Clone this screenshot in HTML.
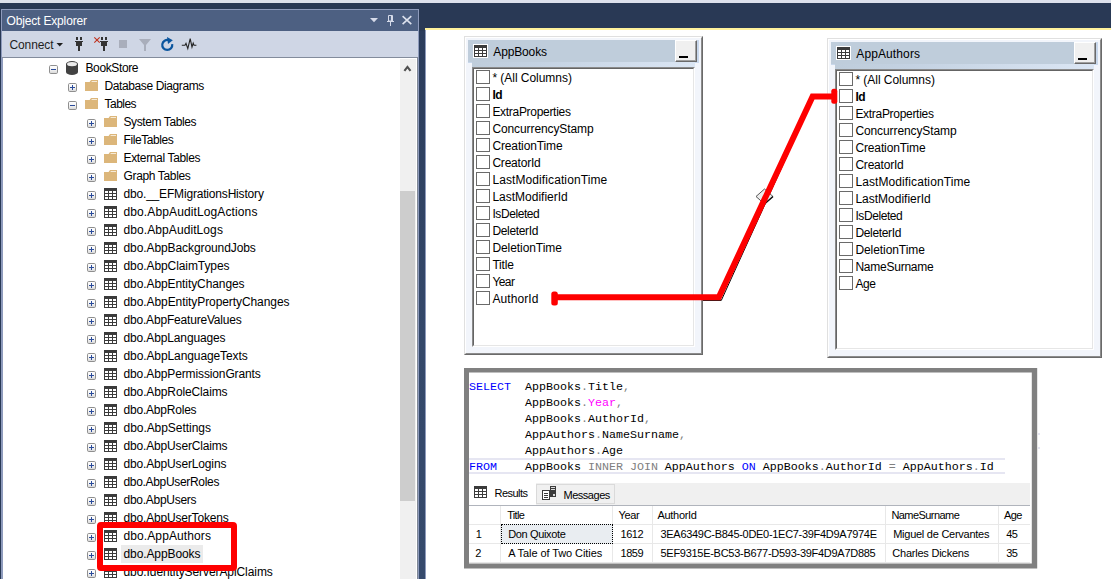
<!DOCTYPE html>
<html><head><meta charset="utf-8"><title>SSMS</title>
<style>
html,body{margin:0;padding:0}
body{width:1111px;height:579px;overflow:hidden;position:relative;background:#293955;font-family:"Liberation Sans", sans-serif;}
.t{position:absolute;white-space:pre;line-height:20px;}
svg{position:absolute;overflow:visible}
</style></head><body>
<div style="position:absolute;left:0px;top:0px;width:1111px;height:3px;background:#dde1ec;"></div>
<div style="position:absolute;left:0px;top:3px;width:1111px;height:576px;background:#293955;"></div>
<div style="position:absolute;left:419px;top:31px;width:6px;height:548px;background:linear-gradient(#2b3c5b,#34486a 300px,#364a6c);"></div>
<div style="position:absolute;left:1px;top:9px;width:418px;height:570px;background:#8e9bbc;"></div>
<div style="position:absolute;left:2px;top:10px;width:416px;height:21px;background:#4d6082;"></div>
<div style="position:absolute;left:2px;top:31px;width:416px;height:26px;background:#cfd6e5;"></div>
<div style="position:absolute;left:2px;top:57px;width:416px;height:1px;background:#838c9c;"></div>
<div style="position:absolute;left:3px;top:58px;width:414px;height:521px;background:#ffffff;"></div>
<div style="position:absolute;left:417px;top:57px;width:1px;height:522px;background:#7f8794;"></div>
<svg style="left:56px;top:43px" width="8" height="4"><path d="M0.5 0 L7 0 L3.75 3.5Z" fill="#1e1e1e"/></svg>
<svg style="left:370px;top:17px" width="9" height="6"><path d="M0 1 L8 1 L4 5.2Z" fill="#d6dbe9"/></svg>
<svg style="left:386px;top:15px" width="9" height="11"><path d="M2.5 0.5 H6.5 V6 H2.5Z M1 6.5 H8 M4.5 6.5 V11" fill="none" stroke="#d6dbe9" stroke-width="1"/><path d="M5.5 0.5V6" stroke="#d6dbe9" stroke-width="1.2"/></svg>
<svg style="left:402px;top:16px" width="10" height="9"><path d="M0.6 0.2 L9.3 8.2 M9.3 0.2 L0.6 8.2" stroke="#dde2ee" stroke-width="1.6" fill="none"/></svg>
<svg style="left:75px;top:37px" width="8" height="14"><path d="M1 0 H3 V3 H1Z M5 0 H7 V3 H5Z M0 4 H8 V5 H7 V9 H5 V14 H3 V9 H1 V5 H0Z" fill="#333333"/></svg>
<svg style="left:100px;top:37px" width="8" height="14"><path d="M1 0 H3 V3 H1Z M5 0 H7 V3 H5Z M0 4 H8 V5 H7 V9 H5 V14 H3 V9 H1 V5 H0Z" fill="#333333"/></svg>
<svg style="left:94px;top:37px" width="6" height="6"><path d="M0.3 0.3 L5.7 5.7 M5.7 0.3 L0.3 5.7" stroke="#c0301c" stroke-width="1.1"/></svg>
<div style="position:absolute;left:119px;top:40px;width:8px;height:8px;background:#a9aebb;"></div>
<svg style="left:139px;top:39px" width="12" height="12"><path d="M0 0 H12 L7 6 V12 H5 V6Z" fill="#a9aebb"/></svg>
<svg style="left:161px;top:37px" width="13" height="14"><path d="M7.8 3.2 A5 5 0 1 0 11.2 7.2" fill="none" stroke="#0a559e" stroke-width="2.2"/><path d="M6 0 L11.8 3.2 L7 7Z" fill="#0a559e"/></svg>
<svg style="left:181px;top:38px" width="16" height="11"><path d="M0.8 7.3 H4 L5 5.3 L6.8 10.6 L9.2 0.6 L11 9 L12.2 5.2 L13 7.3 H15.4" fill="none" stroke="#222" stroke-width="1.1"/></svg>
<div style="position:absolute;left:400px;top:59px;width:16px;height:520px;background:#f0f0f0;"></div>
<div style="position:absolute;left:400px;top:191px;width:15px;height:310px;background:#cdcdcd;"></div>
<svg style="left:403px;top:65px" width="9" height="8"><path d="M1.4 5.9 L4.45 1.9 L7.5 5.9" fill="none" stroke="#505050" stroke-width="2.1" stroke-linejoin="miter"/></svg>
<svg style="left:0;top:0" width="0" height="0"><defs><linearGradient id="eg" x1="0" y1="0" x2="0" y2="1"><stop offset="0" stop-color="#fff"/><stop offset="0.5" stop-color="#f4f4f4"/><stop offset="1" stop-color="#d6d6d6"/></linearGradient></defs></svg>
<div style="position:absolute;left:121px;top:545px;width:82px;height:18px;background:#ebebeb;"></div>
<svg style="left:49px;top:65px" width="9" height="9"><rect x="0.5" y="0.5" width="8" height="8" rx="1.2" fill="url(#eg)" stroke="#8f8f8f"/><path d="M2 4.5 H7 " stroke="#2a4b9b" stroke-width="1"/></svg>
<svg style="left:66px;top:61px" width="12" height="14"><path d="M0 3 A6 3 0 0 1 12 3 V11 A6 3 0 0 1 0 11Z" fill="#424242"/><ellipse cx="6" cy="3.1" rx="5" ry="2.2" fill="#ececec"/></svg>
<svg style="left:68px;top:83px" width="9" height="9"><rect x="0.5" y="0.5" width="8" height="8" rx="1.2" fill="url(#eg)" stroke="#8f8f8f"/><path d="M2 4.5 H7 M4.5 2 V7" stroke="#2a4b9b" stroke-width="1"/></svg>
<svg style="left:85px;top:80px" width="13" height="11"><path d="M0 2 H4.6 L6 0 H13 V11 H0Z" fill="#dcb67a"/><path d="M6.6 1.5 H12" stroke="#f6ead6" stroke-width="1"/></svg>
<svg style="left:68px;top:101px" width="9" height="9"><rect x="0.5" y="0.5" width="8" height="8" rx="1.2" fill="url(#eg)" stroke="#8f8f8f"/><path d="M2 4.5 H7 " stroke="#2a4b9b" stroke-width="1"/></svg>
<svg style="left:85px;top:98px" width="13" height="11"><path d="M0 2 H4.6 L6 0 H13 V11 H0Z" fill="#dcb67a"/><path d="M6.6 1.5 H12" stroke="#f6ead6" stroke-width="1"/></svg>
<svg style="left:87px;top:119px" width="9" height="9"><rect x="0.5" y="0.5" width="8" height="8" rx="1.2" fill="url(#eg)" stroke="#8f8f8f"/><path d="M2 4.5 H7 M4.5 2 V7" stroke="#2a4b9b" stroke-width="1"/></svg>
<svg style="left:104px;top:116px" width="13" height="11"><path d="M0 2 H4.6 L6 0 H13 V11 H0Z" fill="#dcb67a"/><path d="M6.6 1.5 H12" stroke="#f6ead6" stroke-width="1"/></svg>
<svg style="left:87px;top:137px" width="9" height="9"><rect x="0.5" y="0.5" width="8" height="8" rx="1.2" fill="url(#eg)" stroke="#8f8f8f"/><path d="M2 4.5 H7 M4.5 2 V7" stroke="#2a4b9b" stroke-width="1"/></svg>
<svg style="left:104px;top:134px" width="13" height="11"><path d="M0 2 H4.6 L6 0 H13 V11 H0Z" fill="#dcb67a"/><path d="M6.6 1.5 H12" stroke="#f6ead6" stroke-width="1"/></svg>
<svg style="left:87px;top:155px" width="9" height="9"><rect x="0.5" y="0.5" width="8" height="8" rx="1.2" fill="url(#eg)" stroke="#8f8f8f"/><path d="M2 4.5 H7 M4.5 2 V7" stroke="#2a4b9b" stroke-width="1"/></svg>
<svg style="left:104px;top:152px" width="13" height="11"><path d="M0 2 H4.6 L6 0 H13 V11 H0Z" fill="#dcb67a"/><path d="M6.6 1.5 H12" stroke="#f6ead6" stroke-width="1"/></svg>
<svg style="left:87px;top:173px" width="9" height="9"><rect x="0.5" y="0.5" width="8" height="8" rx="1.2" fill="url(#eg)" stroke="#8f8f8f"/><path d="M2 4.5 H7 M4.5 2 V7" stroke="#2a4b9b" stroke-width="1"/></svg>
<svg style="left:104px;top:170px" width="13" height="11"><path d="M0 2 H4.6 L6 0 H13 V11 H0Z" fill="#dcb67a"/><path d="M6.6 1.5 H12" stroke="#f6ead6" stroke-width="1"/></svg>
<svg style="left:87px;top:191px" width="9" height="9"><rect x="0.5" y="0.5" width="8" height="8" rx="1.2" fill="url(#eg)" stroke="#8f8f8f"/><path d="M2 4.5 H7 M4.5 2 V7" stroke="#2a4b9b" stroke-width="1"/></svg>
<svg style="left:104px;top:188px" width="13" height="12"><rect width="13" height="12" fill="#3b3b3b"/><rect x="1" y="3" width="3" height="2" fill="#fff"/><rect x="1" y="6" width="3" height="2" fill="#fff"/><rect x="1" y="9" width="3" height="2" fill="#fff"/><rect x="5" y="3" width="3" height="2" fill="#fff"/><rect x="5" y="6" width="3" height="2" fill="#fff"/><rect x="5" y="9" width="3" height="2" fill="#fff"/><rect x="9" y="3" width="3" height="2" fill="#fff"/><rect x="9" y="6" width="3" height="2" fill="#fff"/><rect x="9" y="9" width="3" height="2" fill="#fff"/></svg>
<svg style="left:87px;top:209px" width="9" height="9"><rect x="0.5" y="0.5" width="8" height="8" rx="1.2" fill="url(#eg)" stroke="#8f8f8f"/><path d="M2 4.5 H7 M4.5 2 V7" stroke="#2a4b9b" stroke-width="1"/></svg>
<svg style="left:104px;top:206px" width="13" height="12"><rect width="13" height="12" fill="#3b3b3b"/><rect x="1" y="3" width="3" height="2" fill="#fff"/><rect x="1" y="6" width="3" height="2" fill="#fff"/><rect x="1" y="9" width="3" height="2" fill="#fff"/><rect x="5" y="3" width="3" height="2" fill="#fff"/><rect x="5" y="6" width="3" height="2" fill="#fff"/><rect x="5" y="9" width="3" height="2" fill="#fff"/><rect x="9" y="3" width="3" height="2" fill="#fff"/><rect x="9" y="6" width="3" height="2" fill="#fff"/><rect x="9" y="9" width="3" height="2" fill="#fff"/></svg>
<svg style="left:87px;top:227px" width="9" height="9"><rect x="0.5" y="0.5" width="8" height="8" rx="1.2" fill="url(#eg)" stroke="#8f8f8f"/><path d="M2 4.5 H7 M4.5 2 V7" stroke="#2a4b9b" stroke-width="1"/></svg>
<svg style="left:104px;top:224px" width="13" height="12"><rect width="13" height="12" fill="#3b3b3b"/><rect x="1" y="3" width="3" height="2" fill="#fff"/><rect x="1" y="6" width="3" height="2" fill="#fff"/><rect x="1" y="9" width="3" height="2" fill="#fff"/><rect x="5" y="3" width="3" height="2" fill="#fff"/><rect x="5" y="6" width="3" height="2" fill="#fff"/><rect x="5" y="9" width="3" height="2" fill="#fff"/><rect x="9" y="3" width="3" height="2" fill="#fff"/><rect x="9" y="6" width="3" height="2" fill="#fff"/><rect x="9" y="9" width="3" height="2" fill="#fff"/></svg>
<svg style="left:87px;top:245px" width="9" height="9"><rect x="0.5" y="0.5" width="8" height="8" rx="1.2" fill="url(#eg)" stroke="#8f8f8f"/><path d="M2 4.5 H7 M4.5 2 V7" stroke="#2a4b9b" stroke-width="1"/></svg>
<svg style="left:104px;top:242px" width="13" height="12"><rect width="13" height="12" fill="#3b3b3b"/><rect x="1" y="3" width="3" height="2" fill="#fff"/><rect x="1" y="6" width="3" height="2" fill="#fff"/><rect x="1" y="9" width="3" height="2" fill="#fff"/><rect x="5" y="3" width="3" height="2" fill="#fff"/><rect x="5" y="6" width="3" height="2" fill="#fff"/><rect x="5" y="9" width="3" height="2" fill="#fff"/><rect x="9" y="3" width="3" height="2" fill="#fff"/><rect x="9" y="6" width="3" height="2" fill="#fff"/><rect x="9" y="9" width="3" height="2" fill="#fff"/></svg>
<svg style="left:87px;top:263px" width="9" height="9"><rect x="0.5" y="0.5" width="8" height="8" rx="1.2" fill="url(#eg)" stroke="#8f8f8f"/><path d="M2 4.5 H7 M4.5 2 V7" stroke="#2a4b9b" stroke-width="1"/></svg>
<svg style="left:104px;top:260px" width="13" height="12"><rect width="13" height="12" fill="#3b3b3b"/><rect x="1" y="3" width="3" height="2" fill="#fff"/><rect x="1" y="6" width="3" height="2" fill="#fff"/><rect x="1" y="9" width="3" height="2" fill="#fff"/><rect x="5" y="3" width="3" height="2" fill="#fff"/><rect x="5" y="6" width="3" height="2" fill="#fff"/><rect x="5" y="9" width="3" height="2" fill="#fff"/><rect x="9" y="3" width="3" height="2" fill="#fff"/><rect x="9" y="6" width="3" height="2" fill="#fff"/><rect x="9" y="9" width="3" height="2" fill="#fff"/></svg>
<svg style="left:87px;top:281px" width="9" height="9"><rect x="0.5" y="0.5" width="8" height="8" rx="1.2" fill="url(#eg)" stroke="#8f8f8f"/><path d="M2 4.5 H7 M4.5 2 V7" stroke="#2a4b9b" stroke-width="1"/></svg>
<svg style="left:104px;top:278px" width="13" height="12"><rect width="13" height="12" fill="#3b3b3b"/><rect x="1" y="3" width="3" height="2" fill="#fff"/><rect x="1" y="6" width="3" height="2" fill="#fff"/><rect x="1" y="9" width="3" height="2" fill="#fff"/><rect x="5" y="3" width="3" height="2" fill="#fff"/><rect x="5" y="6" width="3" height="2" fill="#fff"/><rect x="5" y="9" width="3" height="2" fill="#fff"/><rect x="9" y="3" width="3" height="2" fill="#fff"/><rect x="9" y="6" width="3" height="2" fill="#fff"/><rect x="9" y="9" width="3" height="2" fill="#fff"/></svg>
<svg style="left:87px;top:299px" width="9" height="9"><rect x="0.5" y="0.5" width="8" height="8" rx="1.2" fill="url(#eg)" stroke="#8f8f8f"/><path d="M2 4.5 H7 M4.5 2 V7" stroke="#2a4b9b" stroke-width="1"/></svg>
<svg style="left:104px;top:296px" width="13" height="12"><rect width="13" height="12" fill="#3b3b3b"/><rect x="1" y="3" width="3" height="2" fill="#fff"/><rect x="1" y="6" width="3" height="2" fill="#fff"/><rect x="1" y="9" width="3" height="2" fill="#fff"/><rect x="5" y="3" width="3" height="2" fill="#fff"/><rect x="5" y="6" width="3" height="2" fill="#fff"/><rect x="5" y="9" width="3" height="2" fill="#fff"/><rect x="9" y="3" width="3" height="2" fill="#fff"/><rect x="9" y="6" width="3" height="2" fill="#fff"/><rect x="9" y="9" width="3" height="2" fill="#fff"/></svg>
<svg style="left:87px;top:317px" width="9" height="9"><rect x="0.5" y="0.5" width="8" height="8" rx="1.2" fill="url(#eg)" stroke="#8f8f8f"/><path d="M2 4.5 H7 M4.5 2 V7" stroke="#2a4b9b" stroke-width="1"/></svg>
<svg style="left:104px;top:314px" width="13" height="12"><rect width="13" height="12" fill="#3b3b3b"/><rect x="1" y="3" width="3" height="2" fill="#fff"/><rect x="1" y="6" width="3" height="2" fill="#fff"/><rect x="1" y="9" width="3" height="2" fill="#fff"/><rect x="5" y="3" width="3" height="2" fill="#fff"/><rect x="5" y="6" width="3" height="2" fill="#fff"/><rect x="5" y="9" width="3" height="2" fill="#fff"/><rect x="9" y="3" width="3" height="2" fill="#fff"/><rect x="9" y="6" width="3" height="2" fill="#fff"/><rect x="9" y="9" width="3" height="2" fill="#fff"/></svg>
<svg style="left:87px;top:335px" width="9" height="9"><rect x="0.5" y="0.5" width="8" height="8" rx="1.2" fill="url(#eg)" stroke="#8f8f8f"/><path d="M2 4.5 H7 M4.5 2 V7" stroke="#2a4b9b" stroke-width="1"/></svg>
<svg style="left:104px;top:332px" width="13" height="12"><rect width="13" height="12" fill="#3b3b3b"/><rect x="1" y="3" width="3" height="2" fill="#fff"/><rect x="1" y="6" width="3" height="2" fill="#fff"/><rect x="1" y="9" width="3" height="2" fill="#fff"/><rect x="5" y="3" width="3" height="2" fill="#fff"/><rect x="5" y="6" width="3" height="2" fill="#fff"/><rect x="5" y="9" width="3" height="2" fill="#fff"/><rect x="9" y="3" width="3" height="2" fill="#fff"/><rect x="9" y="6" width="3" height="2" fill="#fff"/><rect x="9" y="9" width="3" height="2" fill="#fff"/></svg>
<svg style="left:87px;top:353px" width="9" height="9"><rect x="0.5" y="0.5" width="8" height="8" rx="1.2" fill="url(#eg)" stroke="#8f8f8f"/><path d="M2 4.5 H7 M4.5 2 V7" stroke="#2a4b9b" stroke-width="1"/></svg>
<svg style="left:104px;top:350px" width="13" height="12"><rect width="13" height="12" fill="#3b3b3b"/><rect x="1" y="3" width="3" height="2" fill="#fff"/><rect x="1" y="6" width="3" height="2" fill="#fff"/><rect x="1" y="9" width="3" height="2" fill="#fff"/><rect x="5" y="3" width="3" height="2" fill="#fff"/><rect x="5" y="6" width="3" height="2" fill="#fff"/><rect x="5" y="9" width="3" height="2" fill="#fff"/><rect x="9" y="3" width="3" height="2" fill="#fff"/><rect x="9" y="6" width="3" height="2" fill="#fff"/><rect x="9" y="9" width="3" height="2" fill="#fff"/></svg>
<svg style="left:87px;top:371px" width="9" height="9"><rect x="0.5" y="0.5" width="8" height="8" rx="1.2" fill="url(#eg)" stroke="#8f8f8f"/><path d="M2 4.5 H7 M4.5 2 V7" stroke="#2a4b9b" stroke-width="1"/></svg>
<svg style="left:104px;top:368px" width="13" height="12"><rect width="13" height="12" fill="#3b3b3b"/><rect x="1" y="3" width="3" height="2" fill="#fff"/><rect x="1" y="6" width="3" height="2" fill="#fff"/><rect x="1" y="9" width="3" height="2" fill="#fff"/><rect x="5" y="3" width="3" height="2" fill="#fff"/><rect x="5" y="6" width="3" height="2" fill="#fff"/><rect x="5" y="9" width="3" height="2" fill="#fff"/><rect x="9" y="3" width="3" height="2" fill="#fff"/><rect x="9" y="6" width="3" height="2" fill="#fff"/><rect x="9" y="9" width="3" height="2" fill="#fff"/></svg>
<svg style="left:87px;top:389px" width="9" height="9"><rect x="0.5" y="0.5" width="8" height="8" rx="1.2" fill="url(#eg)" stroke="#8f8f8f"/><path d="M2 4.5 H7 M4.5 2 V7" stroke="#2a4b9b" stroke-width="1"/></svg>
<svg style="left:104px;top:386px" width="13" height="12"><rect width="13" height="12" fill="#3b3b3b"/><rect x="1" y="3" width="3" height="2" fill="#fff"/><rect x="1" y="6" width="3" height="2" fill="#fff"/><rect x="1" y="9" width="3" height="2" fill="#fff"/><rect x="5" y="3" width="3" height="2" fill="#fff"/><rect x="5" y="6" width="3" height="2" fill="#fff"/><rect x="5" y="9" width="3" height="2" fill="#fff"/><rect x="9" y="3" width="3" height="2" fill="#fff"/><rect x="9" y="6" width="3" height="2" fill="#fff"/><rect x="9" y="9" width="3" height="2" fill="#fff"/></svg>
<svg style="left:87px;top:407px" width="9" height="9"><rect x="0.5" y="0.5" width="8" height="8" rx="1.2" fill="url(#eg)" stroke="#8f8f8f"/><path d="M2 4.5 H7 M4.5 2 V7" stroke="#2a4b9b" stroke-width="1"/></svg>
<svg style="left:104px;top:404px" width="13" height="12"><rect width="13" height="12" fill="#3b3b3b"/><rect x="1" y="3" width="3" height="2" fill="#fff"/><rect x="1" y="6" width="3" height="2" fill="#fff"/><rect x="1" y="9" width="3" height="2" fill="#fff"/><rect x="5" y="3" width="3" height="2" fill="#fff"/><rect x="5" y="6" width="3" height="2" fill="#fff"/><rect x="5" y="9" width="3" height="2" fill="#fff"/><rect x="9" y="3" width="3" height="2" fill="#fff"/><rect x="9" y="6" width="3" height="2" fill="#fff"/><rect x="9" y="9" width="3" height="2" fill="#fff"/></svg>
<svg style="left:87px;top:425px" width="9" height="9"><rect x="0.5" y="0.5" width="8" height="8" rx="1.2" fill="url(#eg)" stroke="#8f8f8f"/><path d="M2 4.5 H7 M4.5 2 V7" stroke="#2a4b9b" stroke-width="1"/></svg>
<svg style="left:104px;top:422px" width="13" height="12"><rect width="13" height="12" fill="#3b3b3b"/><rect x="1" y="3" width="3" height="2" fill="#fff"/><rect x="1" y="6" width="3" height="2" fill="#fff"/><rect x="1" y="9" width="3" height="2" fill="#fff"/><rect x="5" y="3" width="3" height="2" fill="#fff"/><rect x="5" y="6" width="3" height="2" fill="#fff"/><rect x="5" y="9" width="3" height="2" fill="#fff"/><rect x="9" y="3" width="3" height="2" fill="#fff"/><rect x="9" y="6" width="3" height="2" fill="#fff"/><rect x="9" y="9" width="3" height="2" fill="#fff"/></svg>
<svg style="left:87px;top:443px" width="9" height="9"><rect x="0.5" y="0.5" width="8" height="8" rx="1.2" fill="url(#eg)" stroke="#8f8f8f"/><path d="M2 4.5 H7 M4.5 2 V7" stroke="#2a4b9b" stroke-width="1"/></svg>
<svg style="left:104px;top:440px" width="13" height="12"><rect width="13" height="12" fill="#3b3b3b"/><rect x="1" y="3" width="3" height="2" fill="#fff"/><rect x="1" y="6" width="3" height="2" fill="#fff"/><rect x="1" y="9" width="3" height="2" fill="#fff"/><rect x="5" y="3" width="3" height="2" fill="#fff"/><rect x="5" y="6" width="3" height="2" fill="#fff"/><rect x="5" y="9" width="3" height="2" fill="#fff"/><rect x="9" y="3" width="3" height="2" fill="#fff"/><rect x="9" y="6" width="3" height="2" fill="#fff"/><rect x="9" y="9" width="3" height="2" fill="#fff"/></svg>
<svg style="left:87px;top:461px" width="9" height="9"><rect x="0.5" y="0.5" width="8" height="8" rx="1.2" fill="url(#eg)" stroke="#8f8f8f"/><path d="M2 4.5 H7 M4.5 2 V7" stroke="#2a4b9b" stroke-width="1"/></svg>
<svg style="left:104px;top:458px" width="13" height="12"><rect width="13" height="12" fill="#3b3b3b"/><rect x="1" y="3" width="3" height="2" fill="#fff"/><rect x="1" y="6" width="3" height="2" fill="#fff"/><rect x="1" y="9" width="3" height="2" fill="#fff"/><rect x="5" y="3" width="3" height="2" fill="#fff"/><rect x="5" y="6" width="3" height="2" fill="#fff"/><rect x="5" y="9" width="3" height="2" fill="#fff"/><rect x="9" y="3" width="3" height="2" fill="#fff"/><rect x="9" y="6" width="3" height="2" fill="#fff"/><rect x="9" y="9" width="3" height="2" fill="#fff"/></svg>
<svg style="left:87px;top:479px" width="9" height="9"><rect x="0.5" y="0.5" width="8" height="8" rx="1.2" fill="url(#eg)" stroke="#8f8f8f"/><path d="M2 4.5 H7 M4.5 2 V7" stroke="#2a4b9b" stroke-width="1"/></svg>
<svg style="left:104px;top:476px" width="13" height="12"><rect width="13" height="12" fill="#3b3b3b"/><rect x="1" y="3" width="3" height="2" fill="#fff"/><rect x="1" y="6" width="3" height="2" fill="#fff"/><rect x="1" y="9" width="3" height="2" fill="#fff"/><rect x="5" y="3" width="3" height="2" fill="#fff"/><rect x="5" y="6" width="3" height="2" fill="#fff"/><rect x="5" y="9" width="3" height="2" fill="#fff"/><rect x="9" y="3" width="3" height="2" fill="#fff"/><rect x="9" y="6" width="3" height="2" fill="#fff"/><rect x="9" y="9" width="3" height="2" fill="#fff"/></svg>
<svg style="left:87px;top:497px" width="9" height="9"><rect x="0.5" y="0.5" width="8" height="8" rx="1.2" fill="url(#eg)" stroke="#8f8f8f"/><path d="M2 4.5 H7 M4.5 2 V7" stroke="#2a4b9b" stroke-width="1"/></svg>
<svg style="left:104px;top:494px" width="13" height="12"><rect width="13" height="12" fill="#3b3b3b"/><rect x="1" y="3" width="3" height="2" fill="#fff"/><rect x="1" y="6" width="3" height="2" fill="#fff"/><rect x="1" y="9" width="3" height="2" fill="#fff"/><rect x="5" y="3" width="3" height="2" fill="#fff"/><rect x="5" y="6" width="3" height="2" fill="#fff"/><rect x="5" y="9" width="3" height="2" fill="#fff"/><rect x="9" y="3" width="3" height="2" fill="#fff"/><rect x="9" y="6" width="3" height="2" fill="#fff"/><rect x="9" y="9" width="3" height="2" fill="#fff"/></svg>
<svg style="left:87px;top:515px" width="9" height="9"><rect x="0.5" y="0.5" width="8" height="8" rx="1.2" fill="url(#eg)" stroke="#8f8f8f"/><path d="M2 4.5 H7 M4.5 2 V7" stroke="#2a4b9b" stroke-width="1"/></svg>
<svg style="left:104px;top:512px" width="13" height="12"><rect width="13" height="12" fill="#3b3b3b"/><rect x="1" y="3" width="3" height="2" fill="#fff"/><rect x="1" y="6" width="3" height="2" fill="#fff"/><rect x="1" y="9" width="3" height="2" fill="#fff"/><rect x="5" y="3" width="3" height="2" fill="#fff"/><rect x="5" y="6" width="3" height="2" fill="#fff"/><rect x="5" y="9" width="3" height="2" fill="#fff"/><rect x="9" y="3" width="3" height="2" fill="#fff"/><rect x="9" y="6" width="3" height="2" fill="#fff"/><rect x="9" y="9" width="3" height="2" fill="#fff"/></svg>
<svg style="left:87px;top:533px" width="9" height="9"><rect x="0.5" y="0.5" width="8" height="8" rx="1.2" fill="url(#eg)" stroke="#8f8f8f"/><path d="M2 4.5 H7 M4.5 2 V7" stroke="#2a4b9b" stroke-width="1"/></svg>
<svg style="left:104px;top:530px" width="13" height="12"><rect width="13" height="12" fill="#3b3b3b"/><rect x="1" y="3" width="3" height="2" fill="#fff"/><rect x="1" y="6" width="3" height="2" fill="#fff"/><rect x="1" y="9" width="3" height="2" fill="#fff"/><rect x="5" y="3" width="3" height="2" fill="#fff"/><rect x="5" y="6" width="3" height="2" fill="#fff"/><rect x="5" y="9" width="3" height="2" fill="#fff"/><rect x="9" y="3" width="3" height="2" fill="#fff"/><rect x="9" y="6" width="3" height="2" fill="#fff"/><rect x="9" y="9" width="3" height="2" fill="#fff"/></svg>
<svg style="left:87px;top:551px" width="9" height="9"><rect x="0.5" y="0.5" width="8" height="8" rx="1.2" fill="url(#eg)" stroke="#8f8f8f"/><path d="M2 4.5 H7 M4.5 2 V7" stroke="#2a4b9b" stroke-width="1"/></svg>
<svg style="left:104px;top:548px" width="13" height="12"><rect width="13" height="12" fill="#3b3b3b"/><rect x="1" y="3" width="3" height="2" fill="#fff"/><rect x="1" y="6" width="3" height="2" fill="#fff"/><rect x="1" y="9" width="3" height="2" fill="#fff"/><rect x="5" y="3" width="3" height="2" fill="#fff"/><rect x="5" y="6" width="3" height="2" fill="#fff"/><rect x="5" y="9" width="3" height="2" fill="#fff"/><rect x="9" y="3" width="3" height="2" fill="#fff"/><rect x="9" y="6" width="3" height="2" fill="#fff"/><rect x="9" y="9" width="3" height="2" fill="#fff"/></svg>
<svg style="left:87px;top:569px" width="9" height="9"><rect x="0.5" y="0.5" width="8" height="8" rx="1.2" fill="url(#eg)" stroke="#8f8f8f"/><path d="M2 4.5 H7 M4.5 2 V7" stroke="#2a4b9b" stroke-width="1"/></svg>
<svg style="left:104px;top:566px" width="13" height="12"><rect width="13" height="12" fill="#3b3b3b"/><rect x="1" y="3" width="3" height="2" fill="#fff"/><rect x="1" y="6" width="3" height="2" fill="#fff"/><rect x="1" y="9" width="3" height="2" fill="#fff"/><rect x="5" y="3" width="3" height="2" fill="#fff"/><rect x="5" y="6" width="3" height="2" fill="#fff"/><rect x="5" y="9" width="3" height="2" fill="#fff"/><rect x="9" y="3" width="3" height="2" fill="#fff"/><rect x="9" y="6" width="3" height="2" fill="#fff"/><rect x="9" y="9" width="3" height="2" fill="#fff"/></svg>
<div style="position:absolute;left:425px;top:28px;width:1px;height:551px;background:#8e9bbc;"></div>
<div style="position:absolute;left:426px;top:28px;width:685px;height:551px;background:#ffffff;"></div>
<div style="position:absolute;left:425px;top:28px;width:686px;height:2px;background:#fff29d;"></div>
<div style="position:absolute;left:464px;top:36px;width:239px;height:319px;background:#f2f5fb;box-sizing:border-box;border-top:1px solid #e0e0e0;border-left:1px solid #e0e0e0;border-right:1px solid #6a6a6a;border-bottom:1px solid #6a6a6a"></div>
<div style="position:absolute;left:465px;top:37px;width:237px;height:317px;background:transparent;box-sizing:border-box;border-top:1px solid #fff;border-left:1px solid #fff;border-right:1px solid #8c8c8c;border-bottom:1px solid #8c8c8c"></div>
<div style="position:absolute;left:468px;top:40px;width:231px;height:23px;background:#c9d8ec;"></div>
<div style="position:absolute;left:468px;top:40px;width:207px;height:22px;background:#bfcddb;"></div>
<div style="position:absolute;left:472px;top:62px;width:223px;height:5px;background:linear-gradient(90deg,#bfcddb,#c4d2e2 30%,#dbe6f4);"></div>
<div style="position:absolute;left:675px;top:40px;width:22px;height:22px;background:#f0f0f0;box-sizing:border-box;border-top:1px solid #fff;border-left:1px solid #fff;border-right:1px solid #696969;border-bottom:1px solid #696969"></div>
<div style="position:absolute;left:676px;top:41px;width:20px;height:20px;background:transparent;box-sizing:border-box;border-right:1px solid #a0a0a0;border-bottom:1px solid #a0a0a0"></div>
<div style="position:absolute;left:679px;top:56px;width:9px;height:2px;background:#000;"></div>
<div style="position:absolute;left:473px;top:44px;width:15px;height:14px;background:#fff;"></div>
<svg style="left:474px;top:45px" width="13" height="12"><rect width="13" height="12" fill="#3b3b3b"/><rect x="1" y="3" width="3" height="2" fill="#fff"/><rect x="1" y="6" width="3" height="2" fill="#fff"/><rect x="1" y="9" width="3" height="2" fill="#fff"/><rect x="5" y="3" width="3" height="2" fill="#fff"/><rect x="5" y="6" width="3" height="2" fill="#fff"/><rect x="5" y="9" width="3" height="2" fill="#fff"/><rect x="9" y="3" width="3" height="2" fill="#fff"/><rect x="9" y="6" width="3" height="2" fill="#fff"/><rect x="9" y="9" width="3" height="2" fill="#fff"/></svg>
<div style="position:absolute;left:472px;top:67px;width:223px;height:280px;background:#fff;box-sizing:border-box;border-top:1px solid #8a8a8a;border-left:1px solid #8a8a8a;border-right:1px solid #fff;border-bottom:1px solid #fff"></div>
<div style="position:absolute;left:473px;top:68px;width:221px;height:278px;background:transparent;box-sizing:border-box;border-top:1px solid #646464;border-left:1px solid #646464;border-right:1px solid #e6e6e6;border-bottom:1px solid #e6e6e6"></div>
<div style="position:absolute;left:476px;top:70px;width:14px;height:14px;background:#fff;box-sizing:border-box;border:1px solid #6a6a6a"></div>
<div style="position:absolute;left:476px;top:87px;width:14px;height:14px;background:#fff;box-sizing:border-box;border:1px solid #6a6a6a"></div>
<div style="position:absolute;left:476px;top:104px;width:14px;height:14px;background:#fff;box-sizing:border-box;border:1px solid #6a6a6a"></div>
<div style="position:absolute;left:476px;top:121px;width:14px;height:14px;background:#fff;box-sizing:border-box;border:1px solid #6a6a6a"></div>
<div style="position:absolute;left:476px;top:138px;width:14px;height:14px;background:#fff;box-sizing:border-box;border:1px solid #6a6a6a"></div>
<div style="position:absolute;left:476px;top:155px;width:14px;height:14px;background:#fff;box-sizing:border-box;border:1px solid #6a6a6a"></div>
<div style="position:absolute;left:476px;top:172px;width:14px;height:14px;background:#fff;box-sizing:border-box;border:1px solid #6a6a6a"></div>
<div style="position:absolute;left:476px;top:189px;width:14px;height:14px;background:#fff;box-sizing:border-box;border:1px solid #6a6a6a"></div>
<div style="position:absolute;left:476px;top:206px;width:14px;height:14px;background:#fff;box-sizing:border-box;border:1px solid #6a6a6a"></div>
<div style="position:absolute;left:476px;top:223px;width:14px;height:14px;background:#fff;box-sizing:border-box;border:1px solid #6a6a6a"></div>
<div style="position:absolute;left:476px;top:240px;width:14px;height:14px;background:#fff;box-sizing:border-box;border:1px solid #6a6a6a"></div>
<div style="position:absolute;left:476px;top:257px;width:14px;height:14px;background:#fff;box-sizing:border-box;border:1px solid #6a6a6a"></div>
<div style="position:absolute;left:476px;top:274px;width:14px;height:14px;background:#fff;box-sizing:border-box;border:1px solid #6a6a6a"></div>
<div style="position:absolute;left:476px;top:291px;width:14px;height:14px;background:#fff;box-sizing:border-box;border:1px solid #6a6a6a"></div>
<div style="position:absolute;left:827px;top:38px;width:275px;height:320px;background:#f2f5fb;box-sizing:border-box;border-top:1px solid #e0e0e0;border-left:1px solid #e0e0e0;border-right:1px solid #6a6a6a;border-bottom:1px solid #6a6a6a"></div>
<div style="position:absolute;left:828px;top:39px;width:273px;height:318px;background:transparent;box-sizing:border-box;border-top:1px solid #fff;border-left:1px solid #fff;border-right:1px solid #8c8c8c;border-bottom:1px solid #8c8c8c"></div>
<div style="position:absolute;left:831px;top:42px;width:267px;height:23px;background:#c9d8ec;"></div>
<div style="position:absolute;left:831px;top:42px;width:243px;height:22px;background:#bfcddb;"></div>
<div style="position:absolute;left:835px;top:64px;width:259px;height:5px;background:linear-gradient(90deg,#bfcddb,#c4d2e2 30%,#dbe6f4);"></div>
<div style="position:absolute;left:1074px;top:42px;width:22px;height:22px;background:#f0f0f0;box-sizing:border-box;border-top:1px solid #fff;border-left:1px solid #fff;border-right:1px solid #696969;border-bottom:1px solid #696969"></div>
<div style="position:absolute;left:1075px;top:43px;width:20px;height:20px;background:transparent;box-sizing:border-box;border-right:1px solid #a0a0a0;border-bottom:1px solid #a0a0a0"></div>
<div style="position:absolute;left:1078px;top:58px;width:9px;height:2px;background:#000;"></div>
<div style="position:absolute;left:836px;top:46px;width:15px;height:14px;background:#fff;"></div>
<svg style="left:837px;top:47px" width="13" height="12"><rect width="13" height="12" fill="#3b3b3b"/><rect x="1" y="3" width="3" height="2" fill="#fff"/><rect x="1" y="6" width="3" height="2" fill="#fff"/><rect x="1" y="9" width="3" height="2" fill="#fff"/><rect x="5" y="3" width="3" height="2" fill="#fff"/><rect x="5" y="6" width="3" height="2" fill="#fff"/><rect x="5" y="9" width="3" height="2" fill="#fff"/><rect x="9" y="3" width="3" height="2" fill="#fff"/><rect x="9" y="6" width="3" height="2" fill="#fff"/><rect x="9" y="9" width="3" height="2" fill="#fff"/></svg>
<div style="position:absolute;left:835px;top:69px;width:259px;height:281px;background:#fff;box-sizing:border-box;border-top:1px solid #8a8a8a;border-left:1px solid #8a8a8a;border-right:1px solid #fff;border-bottom:1px solid #fff"></div>
<div style="position:absolute;left:836px;top:70px;width:257px;height:279px;background:transparent;box-sizing:border-box;border-top:1px solid #646464;border-left:1px solid #646464;border-right:1px solid #e6e6e6;border-bottom:1px solid #e6e6e6"></div>
<div style="position:absolute;left:839px;top:72px;width:14px;height:14px;background:#fff;box-sizing:border-box;border:1px solid #6a6a6a"></div>
<div style="position:absolute;left:839px;top:89px;width:14px;height:14px;background:#fff;box-sizing:border-box;border:1px solid #6a6a6a"></div>
<div style="position:absolute;left:839px;top:106px;width:14px;height:14px;background:#fff;box-sizing:border-box;border:1px solid #6a6a6a"></div>
<div style="position:absolute;left:839px;top:123px;width:14px;height:14px;background:#fff;box-sizing:border-box;border:1px solid #6a6a6a"></div>
<div style="position:absolute;left:839px;top:140px;width:14px;height:14px;background:#fff;box-sizing:border-box;border:1px solid #6a6a6a"></div>
<div style="position:absolute;left:839px;top:157px;width:14px;height:14px;background:#fff;box-sizing:border-box;border:1px solid #6a6a6a"></div>
<div style="position:absolute;left:839px;top:174px;width:14px;height:14px;background:#fff;box-sizing:border-box;border:1px solid #6a6a6a"></div>
<div style="position:absolute;left:839px;top:191px;width:14px;height:14px;background:#fff;box-sizing:border-box;border:1px solid #6a6a6a"></div>
<div style="position:absolute;left:839px;top:208px;width:14px;height:14px;background:#fff;box-sizing:border-box;border:1px solid #6a6a6a"></div>
<div style="position:absolute;left:839px;top:225px;width:14px;height:14px;background:#fff;box-sizing:border-box;border:1px solid #6a6a6a"></div>
<div style="position:absolute;left:839px;top:242px;width:14px;height:14px;background:#fff;box-sizing:border-box;border:1px solid #6a6a6a"></div>
<div style="position:absolute;left:839px;top:259px;width:14px;height:14px;background:#fff;box-sizing:border-box;border:1px solid #6a6a6a"></div>
<div style="position:absolute;left:839px;top:276px;width:14px;height:14px;background:#fff;box-sizing:border-box;border:1px solid #6a6a6a"></div>
<svg style="left:0;top:0" width="1111" height="579"><path d="M703 300.4 H721.3 L813.5 97.5 H836" fill="none" stroke="#000" stroke-width="1"/><path d="M764.5 189 L773 196.5 L764.5 204 L756 196.5Z" fill="#ededed" stroke="#444" stroke-width="0.9"/><path d="M773 196.5 L764.5 204" fill="none" stroke="#111" stroke-width="1.5"/></svg>
<svg style="left:0;top:0" width="1111" height="579"><path fill-rule="evenodd" fill="#808080" d="M464 368.1 H1037.2 V568.6 H464Z M469 372.5 V563.4 H1031.8 V372.5Z"/></svg>
<div style="position:absolute;left:1038px;top:433px;width:2px;height:2px;background:#e6e6f2;"></div>
<div style="position:absolute;left:1038px;top:447px;width:2px;height:2px;background:#e6e6f2;"></div>
<div style="position:absolute;left:469px;top:458px;width:536px;height:2px;background:#e6e6f2;"></div>
<div style="position:absolute;left:469px;top:472px;width:536px;height:2px;background:#e6e6f2;"></div>
<div style="position:absolute;left:469px;top:483px;width:561px;height:22px;background:#f0f0f0;"></div>
<div style="position:absolute;left:469px;top:483px;width:67px;height:22px;background:#ffffff;"></div>
<div style="position:absolute;left:536px;top:484px;width:79px;height:20px;background:#f0f0f0;box-sizing:border-box;border:1px solid #dadada"></div>
<div style="position:absolute;left:469px;top:505px;width:561px;height:1px;background:#b0b4bc;"></div>
<svg style="left:474px;top:486px" width="13" height="12"><rect width="13" height="12" fill="#3b3b3b"/><rect x="1" y="3" width="3" height="2" fill="#fff"/><rect x="1" y="6" width="3" height="2" fill="#fff"/><rect x="1" y="9" width="3" height="2" fill="#fff"/><rect x="5" y="3" width="3" height="2" fill="#fff"/><rect x="5" y="6" width="3" height="2" fill="#fff"/><rect x="5" y="9" width="3" height="2" fill="#fff"/><rect x="9" y="3" width="3" height="2" fill="#fff"/><rect x="9" y="6" width="3" height="2" fill="#fff"/><rect x="9" y="9" width="3" height="2" fill="#fff"/></svg>
<svg style="left:542px;top:486px" width="15" height="14"><rect x="0.5" y="4.5" width="7" height="9" fill="#fff" stroke="#3b3b3b"/><path d="M2 7.5H6M2 9.5H6M2 11.5H6" stroke="#3b3b3b" stroke-width="1"/><rect x="8" y="0" width="6" height="11" fill="#3b3b3b"/><path d="M9 1.5H13M9 3.5H13" stroke="#ddd" stroke-width="1"/><rect x="11" y="8" width="2" height="2" fill="#ddd"/></svg>
<div style="position:absolute;left:500px;top:505.5px;width:1px;height:57px;background:#e8e8e8;"></div>
<div style="position:absolute;left:612px;top:505.5px;width:1px;height:57px;background:#e8e8e8;"></div>
<div style="position:absolute;left:652px;top:505.5px;width:1px;height:57px;background:#e8e8e8;"></div>
<div style="position:absolute;left:885px;top:505.5px;width:1px;height:57px;background:#e8e8e8;"></div>
<div style="position:absolute;left:998px;top:505.5px;width:1px;height:57px;background:#e8e8e8;"></div>
<div style="position:absolute;left:469px;top:524px;width:561px;height:1px;background:#e8e8e8;"></div>
<div style="position:absolute;left:469px;top:543px;width:561px;height:1px;background:#e8e8e8;"></div>
<div style="position:absolute;left:469px;top:562px;width:561px;height:1px;background:#e8e8e8;"></div>
<div style="position:absolute;left:501px;top:524px;width:112px;height:20px;background:#e9edf1;box-sizing:border-box;border:1px dotted #000"></div>
<span class="t" style='left:6.5px;top:10.84px;font-size:12px;font-family:"Liberation Sans", sans-serif;color:#ffffff;letter-spacing:-0.157px;'>Object Explorer</span>
<span class="t" style='left:9.5px;top:34.84px;font-size:12px;font-family:"Liberation Sans", sans-serif;color:#1e1e1e;letter-spacing:-0.117px;'>Connect</span>
<span class="t" style='left:85.5px;top:57.84px;font-size:12px;font-family:"Liberation Sans", sans-serif;color:#000;letter-spacing:-0.381px;'>BookStore</span>
<span class="t" style='left:104.5px;top:75.84px;font-size:12px;font-family:"Liberation Sans", sans-serif;color:#000;letter-spacing:-0.391px;'>Database Diagrams</span>
<span class="t" style='left:104.5px;top:93.84px;font-size:12px;font-family:"Liberation Sans", sans-serif;color:#000;letter-spacing:-0.518px;'>Tables</span>
<span class="t" style='left:123.5px;top:111.84px;font-size:12px;font-family:"Liberation Sans", sans-serif;color:#000;letter-spacing:-0.393px;'>System Tables</span>
<span class="t" style='left:123.5px;top:129.84px;font-size:12px;font-family:"Liberation Sans", sans-serif;color:#000;letter-spacing:-0.415px;'>FileTables</span>
<span class="t" style='left:123.5px;top:147.84px;font-size:12px;font-family:"Liberation Sans", sans-serif;color:#000;letter-spacing:-0.345px;'>External Tables</span>
<span class="t" style='left:123.5px;top:165.84px;font-size:12px;font-family:"Liberation Sans", sans-serif;color:#000;letter-spacing:-0.351px;'>Graph Tables</span>
<span class="t" style='left:123.5px;top:183.84px;font-size:12px;font-family:"Liberation Sans", sans-serif;color:#000;letter-spacing:-0.181px;'>dbo.__EFMigrationsHistory</span>
<span class="t" style='left:123.5px;top:201.84px;font-size:12px;font-family:"Liberation Sans", sans-serif;color:#000;letter-spacing:0.117px;'>dbo.AbpAuditLogActions</span>
<span class="t" style='left:123.5px;top:219.84px;font-size:12px;font-family:"Liberation Sans", sans-serif;color:#000;letter-spacing:0.087px;'>dbo.AbpAuditLogs</span>
<span class="t" style='left:123.5px;top:237.84px;font-size:12px;font-family:"Liberation Sans", sans-serif;color:#000;letter-spacing:-0.090px;'>dbo.AbpBackgroundJobs</span>
<span class="t" style='left:123.5px;top:255.84px;font-size:12px;font-family:"Liberation Sans", sans-serif;color:#000;letter-spacing:-0.087px;'>dbo.AbpClaimTypes</span>
<span class="t" style='left:123.5px;top:273.84px;font-size:12px;font-family:"Liberation Sans", sans-serif;color:#000;letter-spacing:-0.088px;'>dbo.AbpEntityChanges</span>
<span class="t" style='left:123.5px;top:291.84px;font-size:12px;font-family:"Liberation Sans", sans-serif;color:#000;letter-spacing:-0.078px;'>dbo.AbpEntityPropertyChanges</span>
<span class="t" style='left:123.5px;top:309.84px;font-size:12px;font-family:"Liberation Sans", sans-serif;color:#000;letter-spacing:-0.188px;'>dbo.AbpFeatureValues</span>
<span class="t" style='left:123.5px;top:327.84px;font-size:12px;font-family:"Liberation Sans", sans-serif;color:#000;letter-spacing:-0.134px;'>dbo.AbpLanguages</span>
<span class="t" style='left:123.5px;top:345.84px;font-size:12px;font-family:"Liberation Sans", sans-serif;color:#000;letter-spacing:-0.100px;'>dbo.AbpLanguageTexts</span>
<span class="t" style='left:123.5px;top:363.84px;font-size:12px;font-family:"Liberation Sans", sans-serif;color:#000;letter-spacing:-0.126px;'>dbo.AbpPermissionGrants</span>
<span class="t" style='left:123.5px;top:381.84px;font-size:12px;font-family:"Liberation Sans", sans-serif;color:#000;letter-spacing:-0.123px;'>dbo.AbpRoleClaims</span>
<span class="t" style='left:123.5px;top:399.84px;font-size:12px;font-family:"Liberation Sans", sans-serif;color:#000;letter-spacing:-0.208px;'>dbo.AbpRoles</span>
<span class="t" style='left:123.5px;top:417.84px;font-size:12px;font-family:"Liberation Sans", sans-serif;color:#000;letter-spacing:-0.048px;'>dbo.AbpSettings</span>
<span class="t" style='left:123.5px;top:435.84px;font-size:12px;font-family:"Liberation Sans", sans-serif;color:#000;letter-spacing:-0.164px;'>dbo.AbpUserClaims</span>
<span class="t" style='left:123.5px;top:453.84px;font-size:12px;font-family:"Liberation Sans", sans-serif;color:#000;letter-spacing:-0.157px;'>dbo.AbpUserLogins</span>
<span class="t" style='left:123.5px;top:471.84px;font-size:12px;font-family:"Liberation Sans", sans-serif;color:#000;letter-spacing:-0.322px;'>dbo.AbpUserRoles</span>
<span class="t" style='left:123.5px;top:489.84px;font-size:12px;font-family:"Liberation Sans", sans-serif;color:#000;letter-spacing:-0.268px;'>dbo.AbpUsers</span>
<span class="t" style='left:123.5px;top:507.84px;font-size:12px;font-family:"Liberation Sans", sans-serif;color:#000;letter-spacing:-0.180px;'>dbo.AbpUserTokens</span>
<span class="t" style='left:123.5px;top:525.84px;font-size:12px;font-family:"Liberation Sans", sans-serif;color:#000;letter-spacing:0.103px;'>dbo.AppAuthors</span>
<span class="t" style='left:123.5px;top:543.84px;font-size:12px;font-family:"Liberation Sans", sans-serif;color:#000;letter-spacing:-0.097px;'>dbo.AppBooks</span>
<span class="t" style='left:123.5px;top:561.84px;font-size:12px;font-family:"Liberation Sans", sans-serif;color:#000;letter-spacing:-0.081px;'>dbo.IdentityServerApiClaims</span>
<span class="t" style='left:493.3px;top:41.84px;font-size:12px;font-family:"Liberation Sans", sans-serif;color:#000;letter-spacing:-0.143px;'>AppBooks</span>
<span class="t" style='left:492.4px;top:67.84px;font-size:12px;font-family:"Liberation Sans", sans-serif;color:#000;letter-spacing:-0.037px;'>* (All Columns)</span>
<span class="t" style='left:492.4px;top:84.84px;font-size:12px;font-family:"Liberation Sans", sans-serif;color:#000;font-weight:bold;letter-spacing:-0.372px;'>Id</span>
<span class="t" style='left:492.4px;top:101.84px;font-size:12px;font-family:"Liberation Sans", sans-serif;color:#000;letter-spacing:-0.300px;'>ExtraProperties</span>
<span class="t" style='left:492.4px;top:118.84px;font-size:12px;font-family:"Liberation Sans", sans-serif;color:#000;letter-spacing:-0.095px;'>ConcurrencyStamp</span>
<span class="t" style='left:492.4px;top:135.84px;font-size:12px;font-family:"Liberation Sans", sans-serif;color:#000;letter-spacing:-0.125px;'>CreationTime</span>
<span class="t" style='left:492.4px;top:152.84px;font-size:12px;font-family:"Liberation Sans", sans-serif;color:#000;letter-spacing:-0.204px;'>CreatorId</span>
<span class="t" style='left:492.4px;top:169.84px;font-size:12px;font-family:"Liberation Sans", sans-serif;color:#000;letter-spacing:0.098px;'>LastModificationTime</span>
<span class="t" style='left:492.4px;top:186.84px;font-size:12px;font-family:"Liberation Sans", sans-serif;color:#000;'>LastModifierId</span>
<span class="t" style='left:492.4px;top:203.84px;font-size:12px;font-family:"Liberation Sans", sans-serif;color:#000;letter-spacing:-0.413px;'>IsDeleted</span>
<span class="t" style='left:492.4px;top:220.84px;font-size:12px;font-family:"Liberation Sans", sans-serif;color:#000;letter-spacing:-0.338px;'>DeleterId</span>
<span class="t" style='left:492.4px;top:237.84px;font-size:12px;font-family:"Liberation Sans", sans-serif;color:#000;letter-spacing:-0.068px;'>DeletionTime</span>
<span class="t" style='left:492.4px;top:254.84px;font-size:12px;font-family:"Liberation Sans", sans-serif;color:#000;letter-spacing:-0.184px;'>Title</span>
<span class="t" style='left:492.4px;top:271.84px;font-size:12px;font-family:"Liberation Sans", sans-serif;color:#000;letter-spacing:-0.583px;'>Year</span>
<span class="t" style='left:492.4px;top:288.84px;font-size:12px;font-family:"Liberation Sans", sans-serif;color:#000;letter-spacing:0.089px;'>AuthorId</span>
<span class="t" style='left:856.3px;top:43.84px;font-size:12px;font-family:"Liberation Sans", sans-serif;color:#000;letter-spacing:0.109px;'>AppAuthors</span>
<span class="t" style='left:855.4px;top:69.84px;font-size:12px;font-family:"Liberation Sans", sans-serif;color:#000;letter-spacing:-0.037px;'>* (All Columns)</span>
<span class="t" style='left:855.4px;top:86.84px;font-size:12px;font-family:"Liberation Sans", sans-serif;color:#000;font-weight:bold;letter-spacing:-0.372px;'>Id</span>
<span class="t" style='left:855.4px;top:103.84px;font-size:12px;font-family:"Liberation Sans", sans-serif;color:#000;letter-spacing:-0.300px;'>ExtraProperties</span>
<span class="t" style='left:855.4px;top:120.84px;font-size:12px;font-family:"Liberation Sans", sans-serif;color:#000;letter-spacing:-0.095px;'>ConcurrencyStamp</span>
<span class="t" style='left:855.4px;top:137.84px;font-size:12px;font-family:"Liberation Sans", sans-serif;color:#000;letter-spacing:-0.125px;'>CreationTime</span>
<span class="t" style='left:855.4px;top:154.84px;font-size:12px;font-family:"Liberation Sans", sans-serif;color:#000;letter-spacing:-0.204px;'>CreatorId</span>
<span class="t" style='left:855.4px;top:171.84px;font-size:12px;font-family:"Liberation Sans", sans-serif;color:#000;letter-spacing:0.098px;'>LastModificationTime</span>
<span class="t" style='left:855.4px;top:188.84px;font-size:12px;font-family:"Liberation Sans", sans-serif;color:#000;'>LastModifierId</span>
<span class="t" style='left:855.4px;top:205.84px;font-size:12px;font-family:"Liberation Sans", sans-serif;color:#000;letter-spacing:-0.413px;'>IsDeleted</span>
<span class="t" style='left:855.4px;top:222.84px;font-size:12px;font-family:"Liberation Sans", sans-serif;color:#000;letter-spacing:-0.338px;'>DeleterId</span>
<span class="t" style='left:855.4px;top:239.84px;font-size:12px;font-family:"Liberation Sans", sans-serif;color:#000;letter-spacing:-0.068px;'>DeletionTime</span>
<span class="t" style='left:855.4px;top:256.84px;font-size:12px;font-family:"Liberation Sans", sans-serif;color:#000;letter-spacing:-0.240px;'>NameSurname</span>
<span class="t" style='left:855.4px;top:273.84px;font-size:12px;font-family:"Liberation Sans", sans-serif;color:#000;letter-spacing:-0.380px;'>Age</span>
<span class="t" style='left:469px;top:376.89px;font-size:11.667px;font-family:"Liberation Mono", monospace;color:#000;'><span style="color:#0000ff">SELECT</span>  AppBooks<span style="color:#808080">.</span>Title<span style="color:#808080">,</span></span>
<span class="t" style='left:525px;top:392.89px;font-size:11.667px;font-family:"Liberation Mono", monospace;color:#000;'>AppBooks<span style="color:#808080">.</span><span style="color:#ff00ff">Year</span><span style="color:#808080">,</span></span>
<span class="t" style='left:525px;top:408.89px;font-size:11.667px;font-family:"Liberation Mono", monospace;color:#000;'>AppBooks<span style="color:#808080">.</span>AuthorId<span style="color:#808080">,</span></span>
<span class="t" style='left:525px;top:424.89px;font-size:11.667px;font-family:"Liberation Mono", monospace;color:#000;'>AppAuthors<span style="color:#808080">.</span>NameSurname<span style="color:#808080">,</span></span>
<span class="t" style='left:525px;top:440.89px;font-size:11.667px;font-family:"Liberation Mono", monospace;color:#000;'>AppAuthors<span style="color:#808080">.</span>Age</span>
<span class="t" style='left:469px;top:456.89px;font-size:11.667px;font-family:"Liberation Mono", monospace;color:#000;'><span style="color:#0000ff">FROM</span>    AppBooks <span style="color:#808080">INNER JOIN</span> AppAuthors <span style="color:#0000ff">ON</span> AppBooks<span style="color:#808080">.</span>AuthorId <span style="color:#808080">=</span> AppAuthors<span style="color:#808080">.</span>Id</span>
<span class="t" style='left:494.6px;top:482.89px;font-size:11px;font-family:"Liberation Sans", sans-serif;color:#000;letter-spacing:-0.548px;'>Results</span>
<span class="t" style='left:563.5px;top:484.59px;font-size:11px;font-family:"Liberation Sans", sans-serif;color:#000;letter-spacing:-0.477px;'>Messages</span>
<span class="t" style='left:507.2px;top:504.89px;font-size:11px;font-family:"Liberation Sans", sans-serif;color:#000;letter-spacing:-0.694px;'>Title</span>
<span class="t" style='left:618.4px;top:504.89px;font-size:11px;font-family:"Liberation Sans", sans-serif;color:#000;letter-spacing:-0.311px;'>Year</span>
<span class="t" style='left:657.5px;top:504.89px;font-size:11px;font-family:"Liberation Sans", sans-serif;color:#000;letter-spacing:-0.299px;'>AuthorId</span>
<span class="t" style='left:891.4px;top:504.89px;font-size:11px;font-family:"Liberation Sans", sans-serif;color:#000;letter-spacing:-0.558px;'>NameSurname</span>
<span class="t" style='left:1003.9px;top:504.89px;font-size:11px;font-family:"Liberation Sans", sans-serif;color:#000;letter-spacing:-0.489px;'>Age</span>
<span class="t" style='left:475.8px;top:523.79px;font-size:11px;font-family:"Liberation Sans", sans-serif;color:#000;'>1</span>
<span class="t" style='left:475.3px;top:543.09px;font-size:11px;font-family:"Liberation Sans", sans-serif;color:#000;'>2</span>
<span class="t" style='left:508.2px;top:523.79px;font-size:11px;font-family:"Liberation Sans", sans-serif;color:#000;letter-spacing:-0.346px;'>Don Quixote</span>
<span class="t" style='left:508.2px;top:543.09px;font-size:11px;font-family:"Liberation Sans", sans-serif;color:#000;letter-spacing:-0.084px;'>A Tale of Two Cities</span>
<span class="t" style='left:620.6px;top:523.79px;font-size:11px;font-family:"Liberation Sans", sans-serif;color:#000;letter-spacing:-0.495px;'>1612</span>
<span class="t" style='left:620.6px;top:543.09px;font-size:11px;font-family:"Liberation Sans", sans-serif;color:#000;letter-spacing:-0.495px;'>1859</span>
<span class="t" style='left:660.5px;top:523.79px;font-size:11px;font-family:"Liberation Sans", sans-serif;color:#000;letter-spacing:-0.296px;'>3EA6349C-B845-0DE0-1EC7-39F4D9A7974E</span>
<span class="t" style='left:660.5px;top:543.09px;font-size:11px;font-family:"Liberation Sans", sans-serif;color:#000;letter-spacing:-0.281px;'>5EF9315E-BC53-B677-D593-39F4D9A7D885</span>
<span class="t" style='left:893.2px;top:523.79px;font-size:11px;font-family:"Liberation Sans", sans-serif;color:#000;letter-spacing:-0.255px;'>Miguel de Cervantes</span>
<span class="t" style='left:892.3px;top:543.09px;font-size:11px;font-family:"Liberation Sans", sans-serif;color:#000;letter-spacing:-0.228px;'>Charles Dickens</span>
<span class="t" style='left:1006.3px;top:523.79px;font-size:11px;font-family:"Liberation Sans", sans-serif;color:#000;letter-spacing:-0.750px;'>45</span>
<span class="t" style='left:1006.3px;top:543.09px;font-size:11px;font-family:"Liberation Sans", sans-serif;color:#000;letter-spacing:-0.750px;'>35</span>
<div style="position:absolute;left:96.5px;top:521.5px;width:128.5px;height:37.5px;border:6px solid #fe0000;border-radius:4px"></div>
<svg style="left:0;top:0" width="1111" height="579"><path d="M555 297.2 H718.8 L812.6 96.4 H834" fill="none" stroke="#fe0000" stroke-width="6" stroke-linejoin="miter"/><rect x="551.3" y="291.5" width="6.5" height="14" rx="2.5" fill="#fe0000"/><rect x="831.3" y="88.7" width="6" height="15" rx="2.5" fill="#fe0000"/></svg>
</body></html>
